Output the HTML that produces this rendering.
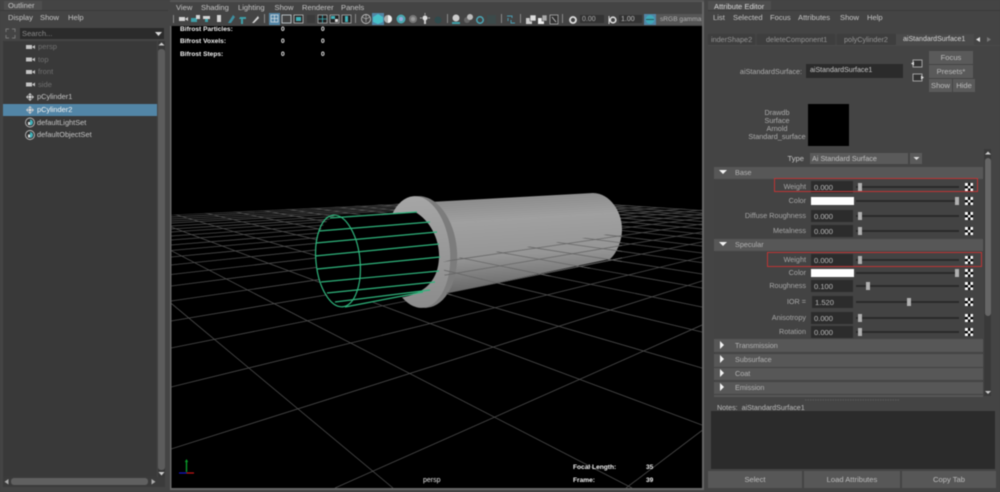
<!DOCTYPE html>
<html><head><meta charset="utf-8">
<style>
html,body{margin:0;padding:0;background:#444;width:1000px;height:492px;overflow:hidden}
#w{position:relative;width:1000px;height:492px;overflow:hidden;background:#444;filter:blur(.5px);font-family:"Liberation Sans",sans-serif;font-size:7.6px;color:#c4c4c4}
#w>div,#w>svg{position:absolute}
.t{position:absolute;white-space:nowrap;line-height:10px;margin-top:-5px}
.k{left:0;top:0}
.h{font-weight:bold;font-size:6.6px;color:#f0f0f0}
.d{color:#707070}
.n{font-size:7.25px}
.sec{position:absolute;left:714px;width:269px;background:#575757}
.sec .a{position:absolute;left:5px;top:50%;width:0;height:0}
.dn .a{border-left:4px solid transparent;border-right:4px solid transparent;border-top:4px solid #f4f4f4;margin-top:-3px}
.rt .a{left:6px;border-top:4px solid transparent;border-bottom:4px solid transparent;border-left:4px solid #f4f4f4;margin-top:-5px}
.sec span{position:absolute;left:21px;top:50%;line-height:10px;margin-top:-5px;color:#b2b2b2;font-size:7.25px}
.r{position:absolute;left:0;width:1000px;height:0}
.r>*{position:absolute;display:block}
.l{right:194px;top:-5px;line-height:10px;color:#a6a6a6;white-space:nowrap;font-size:7.25px}
.f{left:811px;width:39px;padding-left:3px;top:-6px;height:12px;line-height:13px;background:#2c2c2c;color:#b8b8b8;font-style:normal}
.s{left:811px;width:43px;top:-4px;height:8px;background:#fff}
.tr{left:856px;width:103px;top:-1px;height:2px;background:#2a2a2a}
.th{top:-4px;width:4px;height:8px;background:#b0b0b0}
.ck{left:965px;top:-4px;width:8px;height:8px;background:conic-gradient(#000 25%,#fff 0 50%,#000 0 75%,#fff 0);background-size:5.4px 5.4px}
.b{position:absolute;background:#5a5a5a;text-align:center;color:#bcbcbc}
.rb{position:absolute;border:1px solid #bd3434;box-sizing:border-box}
</style></head><body><div id="w">

<!-- Outliner -->
<div style="left:4px;top:1px;width:38px;height:9px;background:#4e4e4e"></div>
<div style="left:0;top:10px;width:168px;height:1px;background:#393939"></div>
<div style="left:20px;top:28px;width:144px;height:11px;background:#2b2b2b"></div>
<div style="left:3px;top:41px;width:154px;height:436px;background:#393939"></div>
<div style="left:3px;top:104px;width:154px;height:12px;background:#5285a6"></div>
<div style="left:158px;top:41px;width:7px;height:436px;background:#383838"></div>
<div style="left:158px;top:49px;width:7px;height:421px;background:#5c5c5c;border-radius:3px"></div>
<div style="left:3px;top:477px;width:162px;height:10px;background:#3b3b3b"></div>
<div style="left:11px;top:478px;width:137px;height:7px;background:#606060;border-radius:3px"></div>

<!-- Attribute editor backgrounds -->
<div style="left:708px;top:1px;width:63px;height:9px;background:#4e4e4e"></div>
<div style="left:708px;top:10px;width:292px;height:1px;background:#393939"></div>
<div style="left:708px;top:34px;width:266px;height:11px;background:#3e3e3e"></div>
<div style="left:896px;top:34px;width:78px;height:11px;background:#4a4a4a"></div>
<div style="left:755px;top:34px;width:2px;height:11px;background:#444"></div>
<div style="left:835px;top:34px;width:2px;height:11px;background:#444"></div>
<div style="left:708px;top:45px;width:292px;height:1px;background:#4a4a4a"></div>
<div style="left:806px;top:64px;width:97px;height:14px;background:#2b2b2b"></div>
<div style="left:808px;top:104px;width:41px;height:42px;background:#000"></div>
<div style="left:810px;top:153px;width:98px;height:11px;background:#5a5a5a"></div>
<div style="left:910px;top:153px;width:12px;height:11px;background:#5a5a5a"></div>
<div style="left:984px;top:149px;width:7px;height:247px;background:#393939"></div>
<div style="left:985px;top:158px;width:6px;height:158px;background:#666;border-radius:3px"></div>
<div style="left:714px;top:179px;width:269px;height:216px;background:#434343"></div>
<div style="left:711px;top:411px;width:284px;height:58px;background:#2b2b2b"></div>

<!-- Viewport + 3D -->
<svg class="k" width="1000" height="492" viewBox="0 0 1000 492" style="left:0;top:0">
<defs>
<clipPath id="vp"><rect x="171" y="26" width="531" height="462"/></clipPath>
<clipPath id="gc"><polygon points="171,215 514,198 702,210 702,488 171,488"/></clipPath>
<clipPath id="oc"><polygon points="457,258 622,232 622,262 447,296 443,262"/></clipPath>
<linearGradient id="bd" x1="0.08" y1="0" x2="0.2" y2="1">
<stop offset="0" stop-color="#858585"/><stop offset=".3" stop-color="#a0a0a0"/><stop offset=".65" stop-color="#969696"/><stop offset="1" stop-color="#666"/></linearGradient>
<linearGradient id="fc" x1="0" y1="0" x2="0" y2="1"><stop offset="0" stop-color="#a6a6a6"/><stop offset="1" stop-color="#8c8c8c"/></linearGradient>
<g id="grid" fill="none" stroke-width=".8">
<path d="M626 488L702 430.5M335 488L702 325M171 449L702 281M171 387L702 257M171 348L702 242M171 321L702 232M171 301L702 224M171 286L702 218M171 274.5L702 214M171 265L702 210M171 257L702 207M171 250.5L702 204M171 245L702 202M171 240L702 200M171 236L702 198.6M171 232L702 197M171 229L702 196M171 226L702 195M171 223L702 194M171 221L702 193M171 219L702 192M171 217L702 191M171 215L702 190.6"/>
<path d="M5 165L393 488M5 165L632 488M5 165L702 425M5 165L702 368M5 165L702 332M5 165L702 307M5 165L702 288M5 165L702 274M5 165L702 262.6M5 165L702 253M5 165L702 246M5 165L702 239M5 165L702 234M5 165L702 229M5 165L702 225M5 165L702 221.5M5 165L702 218M5 165L702 215.4M5 165L702 213M5 165L702 210.5"/>
</g>
</defs>
<rect x="171" y="26" width="531" height="462" fill="#000"/>
<g clip-path="url(#vp)"><g clip-path="url(#gc)"><use href="#grid" stroke="#4c4c4c"/></g></g>
<!-- body -->
<path d="M430 202L593 193C610 193 622 212 622 229C622 242 616 254 610 259L447 293Z" fill="url(#bd)"/>
<!-- flange -->
<ellipse cx="422" cy="252" rx="35" ry="56" transform="rotate(-5 422 252)" fill="#7c7c7c"/>
<ellipse cx="418" cy="252" rx="32" ry="56" transform="rotate(-5 418 252)" fill="url(#fc)"/>
<!-- black tube -->
<path d="M335 216L415 212C430 220 440 240 439 258C438 278 428 292 404 297L345 307C320 300 316 270 316 255C316 235 322 222 335 216Z" fill="#000"/>
<!-- grid over cylinder -->
<g clip-path="url(#oc)"><use href="#grid" stroke="#666"/></g>
<!-- green wire -->
<g fill="none" stroke="#2fb47c" stroke-width="1.2">
<ellipse cx="338" cy="261" rx="22" ry="46" transform="rotate(-6 338 261)"/>
<path d="M330 218L417 212M319 231L430 222M316 243L437 232M315 256L439 244M317 269L440 257M321 282L439 271M327 293L435 282M335 302L430 290M345 307L423 292"/>
</g>
<!-- axes -->
<path d="M186.500 472V461" stroke="#0a9a2a" stroke-width="1.400"/><path d="M184.800 462L186.500 459L188.200 462Z" fill="#0a9a2a"/>
<path d="M186.500 473H179" stroke="#1515c8" stroke-width="1.200"/><path d="M186.500 473H194" stroke="#c81515" stroke-width="1.200"/>
<rect x="170" y="26" width="1.500" height="464" fill="#666"/>
<rect x="702" y="0" width="2" height="490" fill="#666"/>
<rect x="170" y="488" width="534" height="2" fill="#666"/>
<rect x="170" y="0" width="534" height="2" fill="#565656"/>

<!-- toolbar separators -->
<g fill="#8a8a8a"><rect x="173" y="15" width="1" height="8"/><rect x="264" y="14" width="1" height="9"/><rect x="355" y="14" width="1" height="9"/><rect x="447" y="14" width="1" height="9"/><rect x="501" y="14" width="1" height="9"/><rect x="520" y="14" width="1" height="9"/><rect x="562" y="14" width="1" height="9"/></g>
<!-- highlights -->
<rect x="269" y="13" width="11" height="12" fill="#5285a6"/>
<rect x="372" y="13" width="12" height="12" fill="#5285a6"/>
<rect x="644" y="14" width="12" height="11" fill="#5285a6"/>
<rect x="656" y="14" width="46" height="11" fill="#565656"/>
<rect x="580" y="15" width="24" height="8" fill="#333"/>
<rect x="619" y="15" width="23" height="8" fill="#333"/>
<!-- camera group -->
<g fill="#d4d4d4">
<rect x="179" y="17" width="6" height="4"/><path d="M185 19L188 17V21Z"/>
<rect x="191" y="18" width="6" height="4" fill="#3fa0a8"/><rect x="196" y="15" width="4" height="4"/>
<rect x="203" y="16" width="7" height="3"/><rect x="205" y="19" width="3" height="3" fill="#3fa0a8"/>
<rect x="217" y="15" width="4" height="7"/>
<path d="M228 23L233 15L235 17L231 23Z" fill="#3f8fa0"/>
<path d="M240 17H246V19H243V24H241V19H239Z" fill="#3fa0a8"/>
<path d="M252 23L258 16L259 18L254 23Z"/>
</g>
<!-- layout icons -->
<g fill="none" stroke="#cfd8dc" stroke-width=".8">
<rect x="271" y="15" width="7" height="7"/><path d="M274.500 15V22M271 18.500H278"/>
<rect x="282" y="15" width="9" height="8"/>
</g>
<rect x="294" y="15" width="9" height="8" fill="#2a2a2a" stroke="#cfcfcf" stroke-width=".7"/><rect x="296" y="17" width="5" height="4" fill="#3fb0b8"/>
<rect x="307" y="15" width="8" height="8" fill="#3a3a3a"/>
<rect x="318" y="15" width="9" height="8" fill="#222" stroke="#bbb" stroke-width=".7"/><path d="M322.500 15V23M318 19H327" stroke="#3fb0b8" stroke-width=".8"/>
<rect x="330" y="15" width="9" height="8" fill="#222" stroke="#bbb" stroke-width=".7"/><rect x="331" y="16" width="4" height="3" fill="#3fb0b8"/><rect x="335" y="19" width="3" height="3" fill="#ddd"/>
<rect x="342" y="15" width="9" height="8" fill="#222" stroke="#bbb" stroke-width=".7"/><rect x="345" y="16" width="3" height="6" fill="#3fb0b8"/>
<!-- shading -->
<circle cx="366" cy="19" r="4.500" fill="none" stroke="#bbb" stroke-width=".9"/><path d="M366 15V22M362 17L366 19L370 17" stroke="#bbb" stroke-width=".6" fill="none"/>
<path d="M378 14L383 17V22L378 24L373 22V17Z" fill="#48c0c8"/>
<circle cx="388" cy="19" r="4" fill="#aaa"/><path d="M388 15A4 4 0 0 1 388 23Z" fill="#eee"/>
<circle cx="401" cy="19" r="4.500" fill="#4aa8b0"/><circle cx="401" cy="19" r="2" fill="#9ad"/>
<circle cx="413" cy="19" r="4" fill="#777"/><circle cx="413" cy="19" r="2" fill="#999"/>
<circle cx="425" cy="18" r="2.500" fill="#ddd"/><rect x="424" y="20" width="2" height="4" fill="#ccc"/><path d="M420 18H422M428 18H430M425 13V15" stroke="#ccc" stroke-width=".7"/>
<circle cx="438" cy="20" r="3.500" fill="#2f4a4c"/>
<circle cx="456" cy="18" r="3.500" fill="#ccc"/><path d="M452 22H460V24H452Z" fill="#3fa0a8"/>
<circle cx="467" cy="20" r="3" fill="#666"/><circle cx="470" cy="17" r="3" fill="#bbb"/>
<circle cx="480" cy="20" r="3.200" fill="none" stroke="#4aa8b8" stroke-width="1.500"/>
<rect x="487" y="15" width="9" height="9" fill="#3c4a4a"/>
<path d="M507 16H512V18M508 18V21M511 20V23H515" fill="none" stroke="#4a9ab0" stroke-width="1"/>
<rect x="526" y="18" width="6" height="6" fill="#ccc"/><rect x="530" y="15" width="6" height="6" fill="#ddd" stroke="#444" stroke-width=".6"/>
<rect x="538" y="18" width="6" height="6" fill="#eee"/><rect x="542" y="15" width="5" height="6" fill="#aaa" stroke="#444" stroke-width=".6"/>
<rect x="550" y="15" width="8" height="9" fill="#333" stroke="#bbb" stroke-width=".7"/><path d="M552 17L556 22" stroke="#ccc" stroke-width=".8"/>
<circle cx="573" cy="20" r="3" fill="none" stroke="#ddd" stroke-width="1.800"/>
<circle cx="613" cy="20" r="2.800" fill="none" stroke="#ddd" stroke-width="1.600"/><path d="M609 16V24" stroke="#ddd" stroke-width="1"/>
<circle cx="650" cy="19.500" r="4.500" fill="#3fa8b8"/><path d="M646 19.500H654" stroke="#244" stroke-width=".8"/>

<!-- outliner icons -->
<g fill="#c4c4c4">
<rect x="26" y="45" width="6" height="4"/><path d="M32 47L35 45V49Z"/>
<rect x="26" y="57.500" width="6" height="4"/><path d="M32 59.500L35 57.500V61.500Z"/>
<rect x="26" y="70" width="6" height="4"/><path d="M32 72L35 70V74Z"/>
<rect x="26" y="82.500" width="6" height="4"/><path d="M32 84.500L35 82.500V86.500Z"/>
</g>
<g fill="#cfcfcf">
<path d="M30 93L32 95H28ZM30 101L32 99H28ZM26 97L28 95V99ZM34 97L32 95V99Z"/><circle cx="30" cy="97" r="1.600"/>
<path d="M30 106L32 108H28ZM30 114L32 112H28ZM26 110L28 108V112ZM34 110L32 108V112Z"/><circle cx="30" cy="110" r="1.600"/>
</g>
<circle cx="30" cy="122.500" r="4.500" fill="#333" stroke="#bbb" stroke-width=".9"/><path d="M30 119.500A3 3 0 0 1 30 125.500Z" fill="#3fb0b8"/><rect x="28" y="122" width="2" height="3" fill="#ddd"/>
<circle cx="30" cy="135" r="4.500" fill="#333" stroke="#bbb" stroke-width=".9"/><path d="M30 132A3 3 0 0 1 30 138Z" fill="#3fb0b8"/><rect x="28" y="134.500" width="2" height="3" fill="#ddd"/>
<g fill="none" stroke="#777" stroke-width="1"><path d="M6 32V29H9M12 29H15V32M15 35V38H12M9 38H6V35"/></g>
<path d="M155 32H162L158.500 36Z" fill="#d8d8d8"/>
<path d="M158.500 45.500H164.500L161.500 42.500Z" fill="#ccc"/>
<path d="M158.500 472H164.500L161.500 475.500Z" fill="#ccc"/>
<path d="M8.500 479V484.500L4.500 481.700Z" fill="#aaa"/>
<path d="M151.500 479V484.500L155.500 481.700Z" fill="#aaa"/>
<!-- AE icons -->
<rect x="913" y="60" width="9" height="7" fill="#333" stroke="#ccc" stroke-width=".7"/><path d="M911 63.500L914 61.500V65.500Z" fill="#ddd"/>
<rect x="913" y="74" width="9" height="7" fill="#333" stroke="#ccc" stroke-width=".7"/><path d="M924 77.500L921 75.500V79.500Z" fill="#ddd"/>
<path d="M980 37V42L976 39.500Z" fill="#ddd"/><path d="M987 37V42L991 39.500Z" fill="#777"/>
<path d="M913.500 157H919.500L916.500 160Z" fill="#ddd"/>
<path d="M985 154.500H991L988 151.500Z" fill="#ccc"/>
<path d="M985 391H991L988 394Z" fill="#ccc"/>
<path d="M805 400H900" stroke="#5c5c5c" stroke-dasharray="1.500 1"/>
</svg>

<!-- Outliner text -->
<span class="t" style="left:8px;top:6px">Outliner</span>
<span class="t" style="left:8px;top:18px">Display</span>
<span class="t" style="left:40px;top:18px">Show</span>
<span class="t" style="left:68px;top:18px">Help</span>
<span class="t" style="left:22px;top:34px;color:#888">Search...</span>
<span class="t d" style="left:38px;top:47px">persp</span>
<span class="t d" style="left:38px;top:59.500px">top</span>
<span class="t d" style="left:38px;top:72px">front</span>
<span class="t d" style="left:38px;top:84.500px">side</span>
<span class="t" style="left:37px;top:97px;font-size:7.4px">pCylinder1</span>
<span class="t" style="left:37px;top:110px;font-size:7.4px;color:#f0f0f0">pCylinder2</span>
<span class="t" style="left:37px;top:122.500px;font-size:7.4px">defaultLightSet</span>
<span class="t" style="left:37px;top:135px;font-size:7.4px">defaultObjectSet</span>

<!-- Viewport menu + HUD -->
<span class="t" style="left:176px;top:8px">View</span>
<span class="t" style="left:201px;top:8px">Shading</span>
<span class="t" style="left:238px;top:8px">Lighting</span>
<span class="t" style="left:274.500px;top:8px">Show</span>
<span class="t" style="left:302px;top:8px">Renderer</span>
<span class="t" style="left:341px;top:8px">Panels</span>
<span class="t" style="left:582px;top:20px;color:#aaa;font-size:7px">0.00</span>
<span class="t" style="left:621px;top:20px;color:#bbb;font-size:7px">1.00</span>
<span class="t" style="left:660px;top:20px;color:#b0b0b0;font-size:6.6px">sRGB gamma</span>
<div style="left:171px;top:26px;width:531px;height:40px;overflow:hidden">
<span class="t h" style="left:9px;top:3.500px">Bifrost Particles:</span><span class="t h" style="left:110px;top:3.500px">0</span><span class="t h" style="left:150px;top:3.500px">0</span>
<span class="t h" style="left:9px;top:16px">Bifrost Voxels:</span><span class="t h" style="left:110px;top:16px">0</span><span class="t h" style="left:150px;top:16px">0</span>
<span class="t h" style="left:9px;top:28.500px">Bifrost Steps:</span><span class="t h" style="left:110px;top:28.500px">0</span><span class="t h" style="left:150px;top:28.500px">0</span>
</div>
<span class="t h" style="left:573px;top:468px">Focal Length:</span><span class="t h" style="left:646px;top:468px">35</span>
<span class="t h" style="left:573px;top:481px">Frame:</span><span class="t h" style="left:646px;top:481px">39</span>
<span class="t" style="left:423px;top:481px;font-size:7px;color:#e4e4e4">persp</span>

<!-- AE text -->
<span class="t" style="left:714px;top:6.500px;color:#d8d8d8">Attribute Editor</span>
<span class="t" style="left:713px;top:18px">List</span>
<span class="t" style="left:733px;top:18px">Selected</span>
<span class="t" style="left:770px;top:18px">Focus</span>
<span class="t" style="left:798px;top:18px">Attributes</span>
<span class="t" style="left:840px;top:18px">Show</span>
<span class="t" style="left:867px;top:18px">Help</span>
<span class="t n" style="left:711px;top:40px;color:#949494">inderShape2</span>
<span class="t n" style="left:766px;top:40px;color:#949494">deleteComponent1</span>
<span class="t n" style="left:844px;top:40px;color:#949494">polyCylinder2</span>
<span class="t" style="left:903px;top:40px;color:#d8d8d8;font-size:7.05px">aiStandardSurface1</span>
<span class="t n" style="right:198px;top:72px;color:#adadad">aiStandardSurface:</span>
<span class="t" style="left:810px;top:71px;color:#c8c8c8;font-size:7.05px">aiStandardSurface1</span>
<div class="b" style="left:929px;top:51px;width:44px;height:13px;line-height:14px">Focus</div>
<div class="b" style="left:929px;top:65px;width:44px;height:13px;line-height:14px">Presets*</div>
<div class="b" style="left:929px;top:79px;width:23px;height:13px;line-height:14px">Show</div>
<div class="b" style="left:953px;top:79px;width:22px;height:13px;line-height:14px">Hide</div>
<span class="t n" style="left:737px;width:80px;text-align:center;top:113px;color:#adadad">Drawdb</span>
<span class="t n" style="left:737px;width:80px;text-align:center;top:121px;color:#adadad">Surface</span>
<span class="t n" style="left:737px;width:80px;text-align:center;top:129px;color:#adadad">Arnold</span>
<span class="t n" style="left:737px;width:80px;text-align:center;top:137px;color:#adadad">Standard_surface</span>
<span class="t" style="right:196px;top:159px">Type</span>
<span class="t n" style="left:812px;top:159px;color:#c0c0c0">Ai Standard Surface</span>

<div class="sec dn" style="top:167px;height:12px"><i class="a"></i><span>Base</span></div>
<div class="r" style="top:187px"><span class="l">Weight</span><i class="f">0.000</i><b class="tr"></b><b class="th" style="left:858px"></b><b class="ck"></b></div>
<div class="r" style="top:200.500px"><span class="l">Color</span><b class="s"></b><b class="tr"></b><b class="th" style="left:955px"></b><b class="ck"></b></div>
<div class="r" style="top:215.500px"><span class="l">Diffuse Roughness</span><i class="f">0.000</i><b class="tr"></b><b class="th" style="left:858px"></b><b class="ck"></b></div>
<div class="r" style="top:230.500px"><span class="l">Metalness</span><i class="f">0.000</i><b class="tr"></b><b class="th" style="left:858px"></b><b class="ck"></b></div>
<div class="sec dn" style="top:239px;height:12px"><i class="a"></i><span>Specular</span></div>
<div class="r" style="top:259.500px"><span class="l">Weight</span><i class="f">0.000</i><b class="tr"></b><b class="th" style="left:858px"></b><b class="ck"></b></div>
<div class="r" style="top:273px"><span class="l">Color</span><b class="s"></b><b class="tr"></b><b class="th" style="left:955px"></b><b class="ck"></b></div>
<div class="r" style="top:286px"><span class="l">Roughness</span><i class="f">0.100</i><b class="tr"></b><b class="th" style="left:866px"></b><b class="ck"></b></div>
<div class="r" style="top:302px"><span class="l">IOR =</span><i class="f" style="left:812px;width:38px">1.520</i><b class="tr"></b><b class="th" style="left:907px"></b><b class="ck"></b></div>
<div class="r" style="top:317.500px"><span class="l">Anisotropy</span><i class="f">0.000</i><b class="tr"></b><b class="th" style="left:858px"></b><b class="ck"></b></div>
<div class="r" style="top:331.500px"><span class="l">Rotation</span><i class="f">0.000</i><b class="tr"></b><b class="th" style="left:858px"></b><b class="ck"></b></div>
<div class="rb" style="left:774px;top:178px;width:204px;height:14px"></div>
<div class="rb" style="left:767px;top:252px;width:215px;height:15px"></div>

<div class="sec rt" style="top:339px;height:13px"><i class="a"></i><span>Transmission</span></div>
<div class="sec rt" style="top:354px;height:12.500px"><i class="a"></i><span>Subsurface</span></div>
<div class="sec rt" style="top:367.500px;height:12.500px"><i class="a"></i><span>Coat</span></div>
<div class="sec rt" style="top:381.500px;height:12.500px"><i class="a"></i><span>Emission</span></div>
<div style="left:714px;top:395px;width:269px;height:2px;background:#575757"></div>
<span class="t" style="left:717px;top:407.500px;white-space:pre;color:#bcbcbc;font-size:7.15px">Notes:  aiStandardSurface1</span>
<div class="b" style="left:708px;top:471px;width:94px;height:17px;line-height:18px;background:#575757">Select</div>
<div class="b" style="left:804px;top:471px;width:96px;height:17px;line-height:18px;background:#575757">Load Attributes</div>
<div class="b" style="left:902px;top:471px;width:94px;height:17px;line-height:18px;background:#575757">Copy Tab</div>
</div></body></html>
